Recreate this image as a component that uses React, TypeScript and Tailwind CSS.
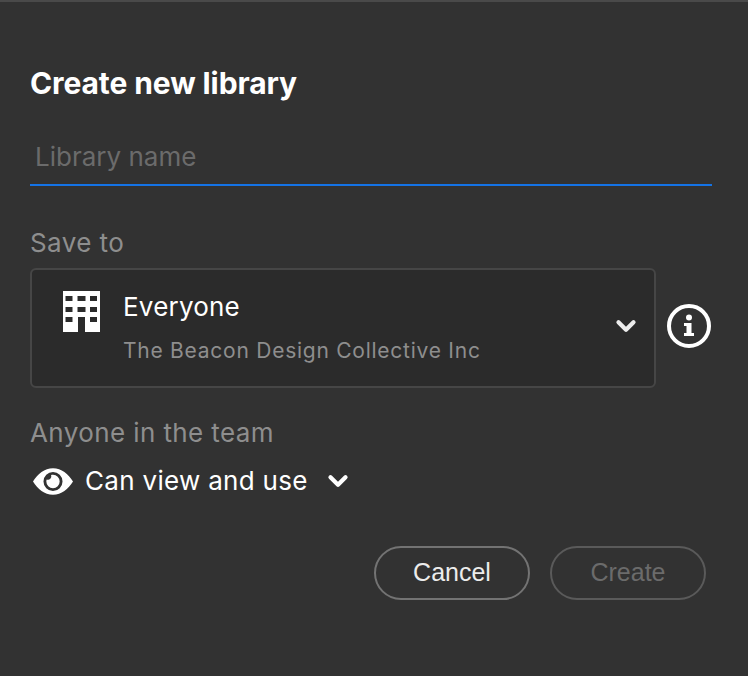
import { ChevronDown } from 'lucide-react';

function BuildingIcon() {
  return (
    <svg width="37" height="41" viewBox="0 0 37 41" className="shrink-0">
      <path
        fill="#fff"
        fillRule="evenodd"
        d="M0 0h37v41H22V26h-7v15H0z M2.500 5v5h7V5z M14.500 5v5h8V5z M27 5v5h7V5z M2.500 16v5h7v-5z M14.500 16v5h8v-5z M27 16v5h7v-5z M2.500 26v5h7v-5z M27 26v5h7v-5z"
      />
    </svg>
  );
}

function InfoIcon() {
  return (
    <svg width="44" height="44" viewBox="0 0 44 44" className="shrink-0 mb-[4px]">
      <circle cx="22" cy="22" r="20" fill="none" stroke="#fff" strokeWidth="4" />
      <circle cx="22" cy="13.500" r="3" fill="#fff" />
      <path fill="#fff" d="M17 19h7.500v10h2.500v3H17v-3h2.500v-7H17z" />
    </svg>
  );
}

function EyeIcon() {
  return (
    <svg width="40" height="27" viewBox="0 0 42 28" className="shrink-0">
      <path
        fill="#fff"
        fillRule="evenodd"
        d="M21 0C12 0 5 6 0 14c5 8 12 14 21 14s16-6 21-14C37 6 30 0 21 0z M21 4a10 10 0 1 1 0 20a10 10 0 0 1 0-20z"
      />
      <path
        fill="#fff"
        fillRule="evenodd"
        d="M21 7a7 7 0 1 1-7 7c0-.8.1-1.500.4-2.200A3.500 3.500 0 0 0 19 7.300c.6-.2 1.300-.3 2-.3z"
      />
    </svg>
  );
}

export default function App() {
  return (
    <div className="min-h-[676px] bg-[#323232] border-t-2 border-[#4a4a4a] px-[30px] font-['Inter',sans-serif]">
      <h1 className="pt-[62px] text-[30px] leading-[38px] font-bold tracking-[-0.1px] text-white">
        Create new library
      </h1>

      {/* Name */}
      <div className="mt-[34px] h-[50px] w-[682px] border-b-2 border-[#1473e6] pl-[5px]">
        <input
          placeholder="Library name"
          className="w-full h-[40px] bg-transparent text-[26px] outline-none text-white placeholder:text-[#6b6b6b]"
        />
      </div>

      {/* Save to */}
      <p className="mt-[39px] text-[26px] leading-[36px] tracking-[0.4px] text-[#8e8e8e]">Save to</p>
      <div className="mt-[7px] flex items-center gap-[11px]">
        <div className="flex h-[120px] w-[626px] items-start rounded-md border-2 border-[#464646] bg-[#2b2b2b] pl-[31px] pr-[13px]">
          <div className="mt-[21px]">
            <BuildingIcon />
          </div>
          <div className="ml-[23px] flex-1 pt-[19px]">
            <p className="text-[26px] leading-[36px] tracking-[0.2px] text-white">Everyone</p>
            <p className="mt-[11px] text-[21px] leading-[30px] tracking-[0.75px] text-[#8e8e8e]">
              The Beacon Design Collective Inc
            </p>
          </div>
          <ChevronDown size={30} strokeWidth={3.4} className="mt-[41px] text-[#ececec]" />
        </div>
        <InfoIcon />
      </div>

      {/* Permissions */}
      <p className="mt-[27px] text-[26px] leading-[36px] tracking-[0.4px] text-[#8e8e8e]">Anyone in the team</p>
      <div className="mt-[12px] flex h-[36px] items-center pl-[3px]">
        <EyeIcon />
        <span className="ml-[12px] text-[26px] leading-[36px] tracking-[0.3px] text-white">Can view and use</span>
        <ChevronDown size={30} strokeWidth={3.4} className="ml-[15px] text-white" />
      </div>

      {/* Actions */}
      <div className="mt-[47px] flex justify-end gap-5 pr-[12px] font-['Liberation_Sans',sans-serif] text-[25px]">
        <button className="h-[54px] w-[156px] rounded-full border-2 border-[#737373] pb-[1px] text-[#ececec]">
          Cancel
        </button>
        <button disabled className="h-[54px] w-[156px] rounded-full border-2 border-[#5a5a5a] pb-[1px] text-[#6b6b6b]">
          Create
        </button>
      </div>
    </div>
  );
}
